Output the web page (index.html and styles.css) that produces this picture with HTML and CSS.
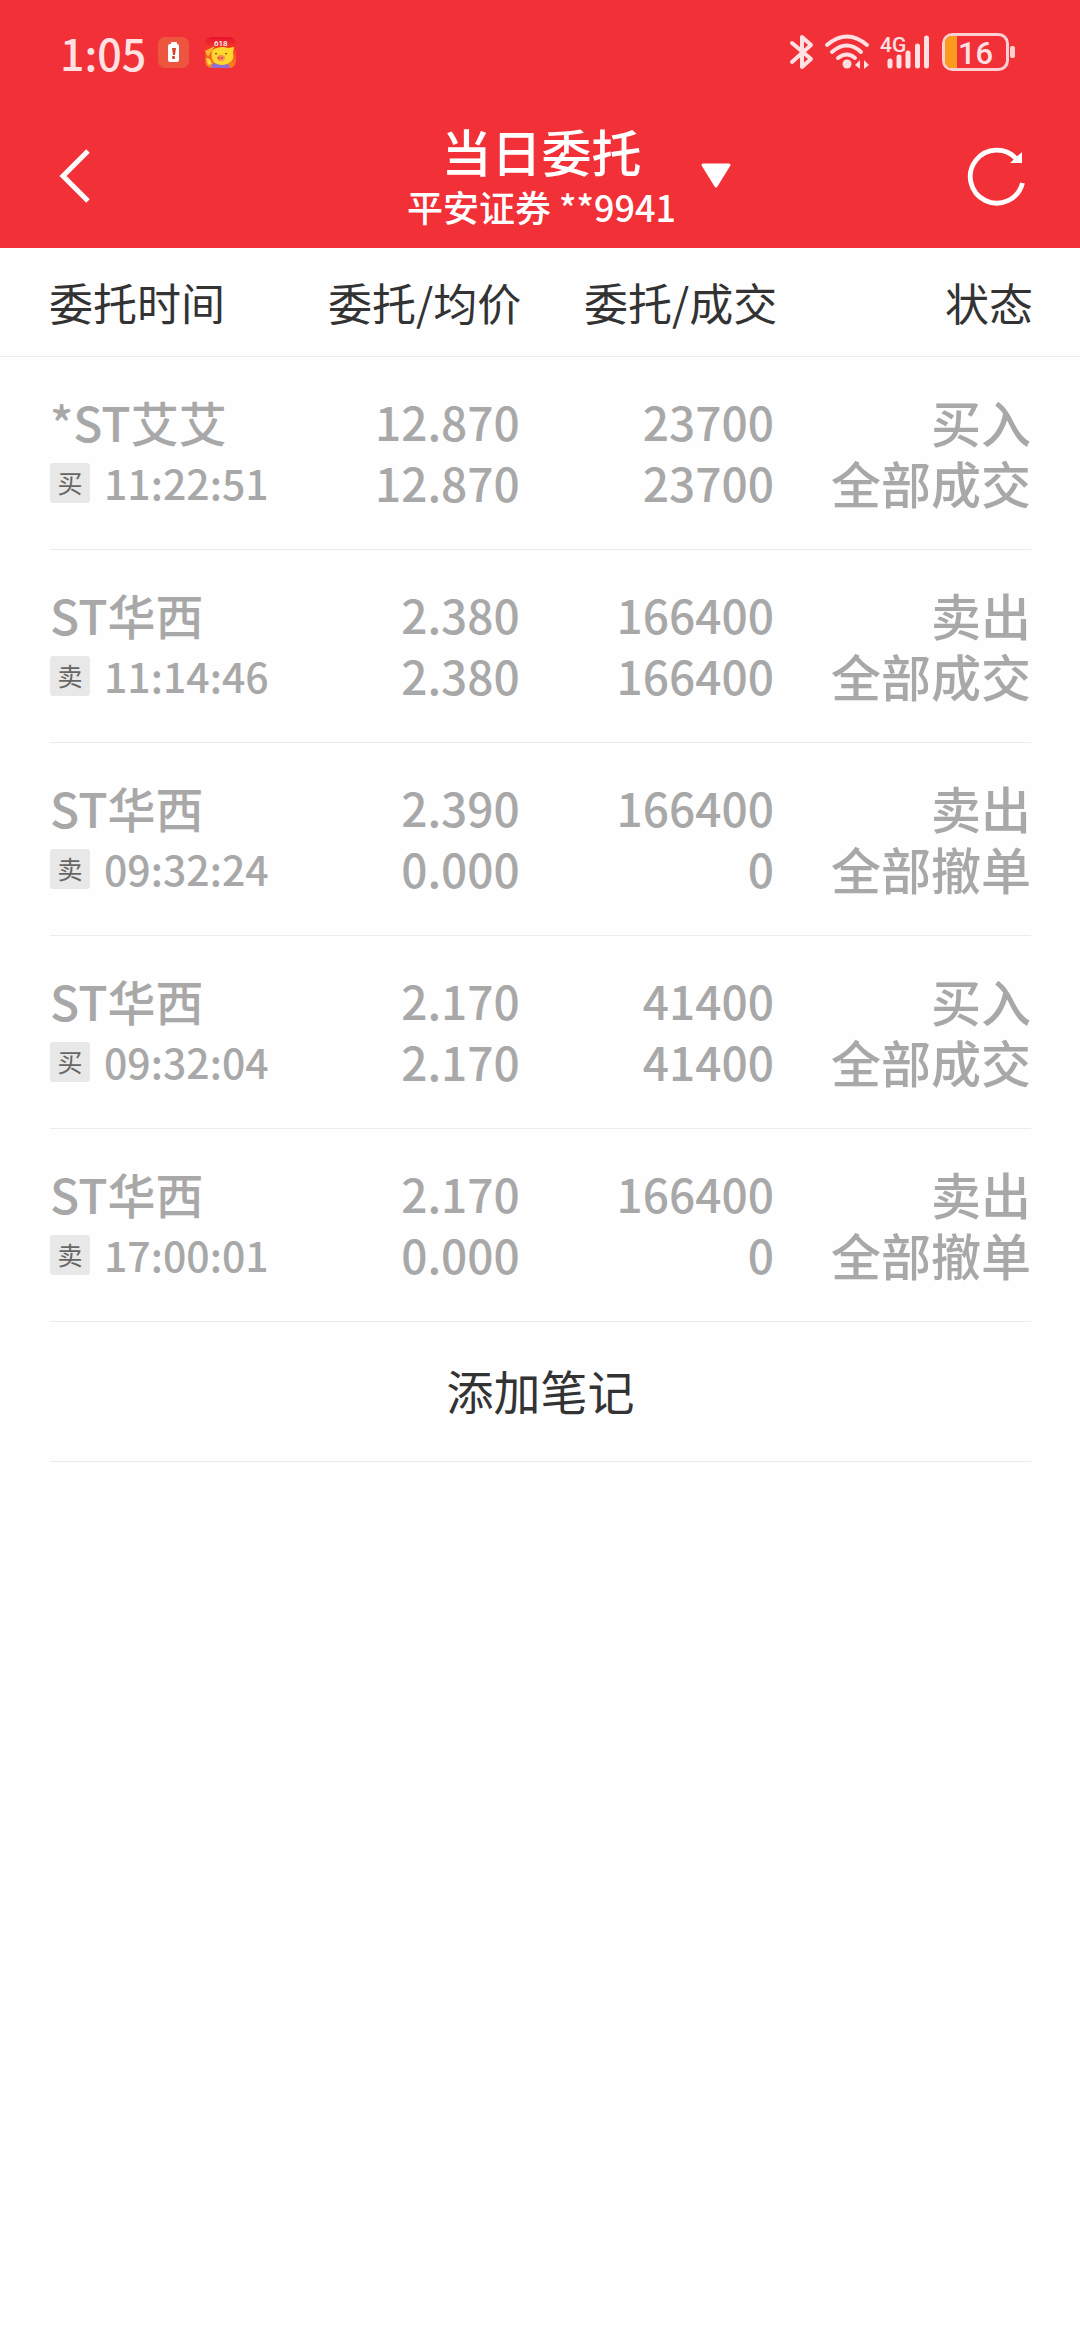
FILE: index.html
```html
<!DOCTYPE html>
<html lang="zh-CN">
<head>
<meta charset="utf-8">
<meta name="viewport" content="width=device-width, initial-scale=1">
<title>当日委托</title>
<link rel="stylesheet" href="styles.css">
</head>
<body>
<header class="top">
  <div class="status-bar">
    <div class="status-left">
      <span class="clock">1:05</span>
      <svg class="app-icon" viewBox="0 0 31 31" aria-hidden="true">
        <rect width="31" height="31" rx="7" fill="#ee553f"/>
        <rect x="13" y="5" width="6" height="4" rx="1" fill="#fff"/>
        <rect x="10" y="7" width="11" height="18" rx="2" fill="#fff"/>
        <path d="M14 11h4l-1 7h-2z" fill="#d8432f"/>
        <rect x="14" y="19" width="3" height="3" rx="1" fill="#d8432f"/>
      </svg>
      <svg class="app-icon" viewBox="0 0 31 31" aria-hidden="true">
        <defs>
          <clipPath id="tile"><rect width="31" height="31" rx="7"/></clipPath>
          <linearGradient id="warm" x1="0" y1="0" x2="0" y2="1"><stop offset="0" stop-color="#e9102e"/><stop offset="1" stop-color="#ff8a1c"/></linearGradient>
        </defs>
        <g clip-path="url(#tile)">
          <rect width="31" height="31" fill="url(#warm)"/>
          <path d="M0 14L10 9 3 20z" fill="#ffb52e"/>
          <path d="M1 21l4 1 2 5-4 1z" fill="#ffd93b"/>
          <path d="M6 31q0-6 9-5 9-1 10 5z" fill="#8f6fd0"/>
          <path d="M7 14q2-3 5-3 6-2 11 0l6-1-1 6q2 6-4 10-7 4-14 0-5-4-3-12z" fill="#ffd62c"/>
          <ellipse cx="16" cy="21" rx="4" ry="3" fill="#ff8a58"/>
          <path d="M14 20v2M17 20v2" stroke="#a33c20" stroke-width="1"/>
          <path d="M10 17q1-1 2 0M20 17q1-1 2 0" stroke="#5b3410" stroke-width="1" fill="none"/>
        </g>
        <text x="9" y="9" font-size="8" fill="#fff">618</text>
      </svg>
    </div>
    <div class="status-right">
      <svg width="24" height="36" viewBox="0 0 24 36" fill="none" stroke="#ffe1e3" stroke-width="4" stroke-linecap="round" stroke-linejoin="round" aria-label="蓝牙">
        <path d="M2 9L21 25 12 33V3L21 11 2 28"/>
      </svg>
      <svg class="wifi" width="46" height="36" viewBox="0 0 46 36" fill="none" stroke="#ffe1e3" stroke-width="4" stroke-linecap="round" aria-label="无线网络">
        <path d="M3 11Q23-6 43 11M8 18Q23 5 37 18M14 24Q23 17 31 24"/>
        <circle cx="23" cy="30" r="4.5" fill="#ffe1e3" stroke="none"/>
        <path d="M36 26v9l-5-4zM40 26v9l5-4z" fill="#ffe1e3" stroke="none"/>
      </svg>
      <svg class="signal" width="52" height="36" viewBox="0 0 52 36" aria-label="4G 信号">
        <text x="0" y="18" font-size="21" fill="#ffe1e3">4G</text>
        <path d="M10 27v5M19 23v9M28 19v13M37.500 12v20M46.500 4v28" stroke="#ffe1e3" stroke-width="5" stroke-linecap="round"/>
      </svg>
      <svg class="battery" width="74" height="38" viewBox="0 0 74 38" aria-label="电量 16%">
        <rect x="1.500" y="1.500" width="64" height="35" rx="9" fill="none" stroke="#ffd0d3" stroke-width="3"/>
        <path d="M15 3H10Q3 3 3 10v18q0 7 7 7h5z" fill="#fa9b1e"/>
        <rect x="68" y="13" width="5" height="12" rx="2" fill="#ffd0d3"/>
        <text x="16" y="31" font-size="31" fill="#ffe1e3">16</text>
      </svg>
    </div>
  </div>
  <div class="app-bar">
    <button class="icon-button" type="button" aria-label="返回">
      <svg width="34" height="56" viewBox="0 0 34 56" fill="none" stroke="#fff" stroke-width="5"><path d="M31 3L6 28l25 25"/></svg>
    </button>
    <button class="account" type="button" aria-haspopup="listbox">
      <span class="account-text">
        <span class="title">当日委托</span>
        <span class="subtitle">平安证券 **9941</span>
      </span>
      <svg width="32" height="26" viewBox="0 0 32 26" aria-hidden="true"><path d="M3 2h26L16 23z" fill="#fff" stroke="#fff" stroke-width="3" stroke-linejoin="round"/></svg>
    </button>
    <button class="icon-button refresh" type="button" aria-label="刷新">
      <svg width="58" height="60" viewBox="0 0 58 60"><path d="M54.500 37A26.500 26.500 0 1 1 49 13.500" fill="none" stroke="#fff" stroke-width="4.800"/><path d="M54 6v11H42z" fill="#fff"/></svg>
    </button>
  </div>
</header>
<main>
  <table class="orders">
    <thead>
      <tr><th scope="col">委托时间</th><th scope="col">委托/均价</th><th scope="col">委托/成交</th><th scope="col">状态</th></tr>
    </thead>
    <tbody>
      <tr>
        <td><span class="name">*ST艾艾</span><span class="when"><span class="badge">买</span><time>11:22:51</time></span></td>
        <td class="num"><span>12.870</span><span>12.870</span></td>
        <td class="num"><span>23700</span><span>23700</span></td>
        <td class="state"><span>买入</span><span>全部成交</span></td>
      </tr>
      <tr>
        <td><span class="name">ST华西</span><span class="when"><span class="badge">卖</span><time>11:14:46</time></span></td>
        <td class="num"><span>2.380</span><span>2.380</span></td>
        <td class="num"><span>166400</span><span>166400</span></td>
        <td class="state"><span>卖出</span><span>全部成交</span></td>
      </tr>
      <tr>
        <td><span class="name">ST华西</span><span class="when"><span class="badge">卖</span><time>09:32:24</time></span></td>
        <td class="num"><span>2.390</span><span>0.000</span></td>
        <td class="num"><span>166400</span><span>0</span></td>
        <td class="state"><span>卖出</span><span>全部撤单</span></td>
      </tr>
      <tr>
        <td><span class="name">ST华西</span><span class="when"><span class="badge">买</span><time>09:32:04</time></span></td>
        <td class="num"><span>2.170</span><span>2.170</span></td>
        <td class="num"><span>41400</span><span>41400</span></td>
        <td class="state"><span>买入</span><span>全部成交</span></td>
      </tr>
      <tr>
        <td><span class="name">ST华西</span><span class="when"><span class="badge">卖</span><time>17:00:01</time></span></td>
        <td class="num"><span>2.170</span><span>0.000</span></td>
        <td class="num"><span>166400</span><span>0</span></td>
        <td class="state"><span>卖出</span><span>全部撤单</span></td>
      </tr>
    </tbody>
  </table>
  <button class="add-note" type="button">添加笔记</button>
</main>
</body>
</html>
```
FILE: styles.css
```css
* {
  box-sizing: border-box;
}

body {
  margin: 0;
  background: #fefefe;
  color: #333;
  font-family: "Noto Sans CJK SC", sans-serif;
}

button {
  margin: 0;
  padding: 0;
  border: 0;
  background: none;
  color: inherit;
  font: inherit;
}

svg {
  display: block;
  flex: none;
  overflow: visible;
}

svg text {
  font-family: Roboto, sans-serif;
}

.top {
  background: #f23038;
  color: #fff;
}

/* Device status bar */
.status-bar {
  display: flex;
  justify-content: space-between;
  align-items: center;
  height: 104px;
  padding: 0 64px 0 60px;
  color: #ffe1e3;
  font-weight: 500;
}

.status-left,
.status-right {
  display: flex;
  align-items: center;
}

.clock {
  margin-right: 12px;
  font-size: 43px;
  line-height: 60px;
}

.app-icon {
  width: 31px;
  height: 31px;
}

.app-icon + .app-icon {
  margin-left: 16px;
}

.wifi,
.signal,
.battery {
  margin-left: 10px;
}

/* Title bar */
.app-bar {
  display: grid;
  grid-template-columns: 1fr auto 1fr;
  align-items: center;
  height: 144px;
  padding: 0 54px 0 57px;
}

.icon-button {
  justify-self: start;
}

.refresh {
  justify-self: end;
}

.account {
  display: flex;
  align-items: center;
  gap: 24px;
  padding-left: 56px;
}

.account-text {
  display: flex;
  flex-direction: column;
  align-items: center;
  font-weight: 500;
}

.title {
  font-size: 50px;
  line-height: 60px;
}

.subtitle {
  font-size: 36px;
  line-height: 52px;
}

/* Orders */
.orders,
.orders thead,
.orders tbody {
  display: block;
}

.orders tr {
  display: grid;
  grid-template-columns: 22fr 26fr 26fr 26fr;
}

.orders th,
.orders td {
  padding: 0;
  text-align: right;
  white-space: nowrap;
}

.orders th:first-child,
.orders td:first-child {
  text-align: left;
}

.orders thead {
  padding: 20px 47px 20px 49px;
  border-bottom: 1px solid #ececec;
}

.orders th {
  font-size: 44px;
  font-weight: 400;
  line-height: 68px;
}

.orders tbody {
  margin: 0 49px 0 50px;
}

.orders tbody tr {
  padding: 34px 0 36px;
  border-bottom: 1px solid #ececec;
  color: #a8a8a8;
  font-weight: 500;
}

.orders td > span {
  display: block;
  height: 61px;
  line-height: 61px;
}

.name {
  font-size: 48px;
}

.orders .num {
  padding-right: 3px;
  font-size: 46px;
}

.state {
  font-size: 50px;
}

.orders td > .when {
  display: flex;
  align-items: center;
  gap: 14px;
  font-size: 41px;
}

.badge {
  width: 40px;
  height: 40px;
  border-radius: 3px;
  background: #e8e8e8;
  color: #666;
  font-size: 25px;
  font-weight: 400;
  line-height: 38px;
  text-align: center;
}

.add-note {
  display: block;
  width: calc(100% - 99px);
  margin: 0 49px 0 50px;
  padding: 33px 0 36px;
  border-bottom: 1px solid #ececec;
  font-size: 47px;
  line-height: 70px;
}
```
